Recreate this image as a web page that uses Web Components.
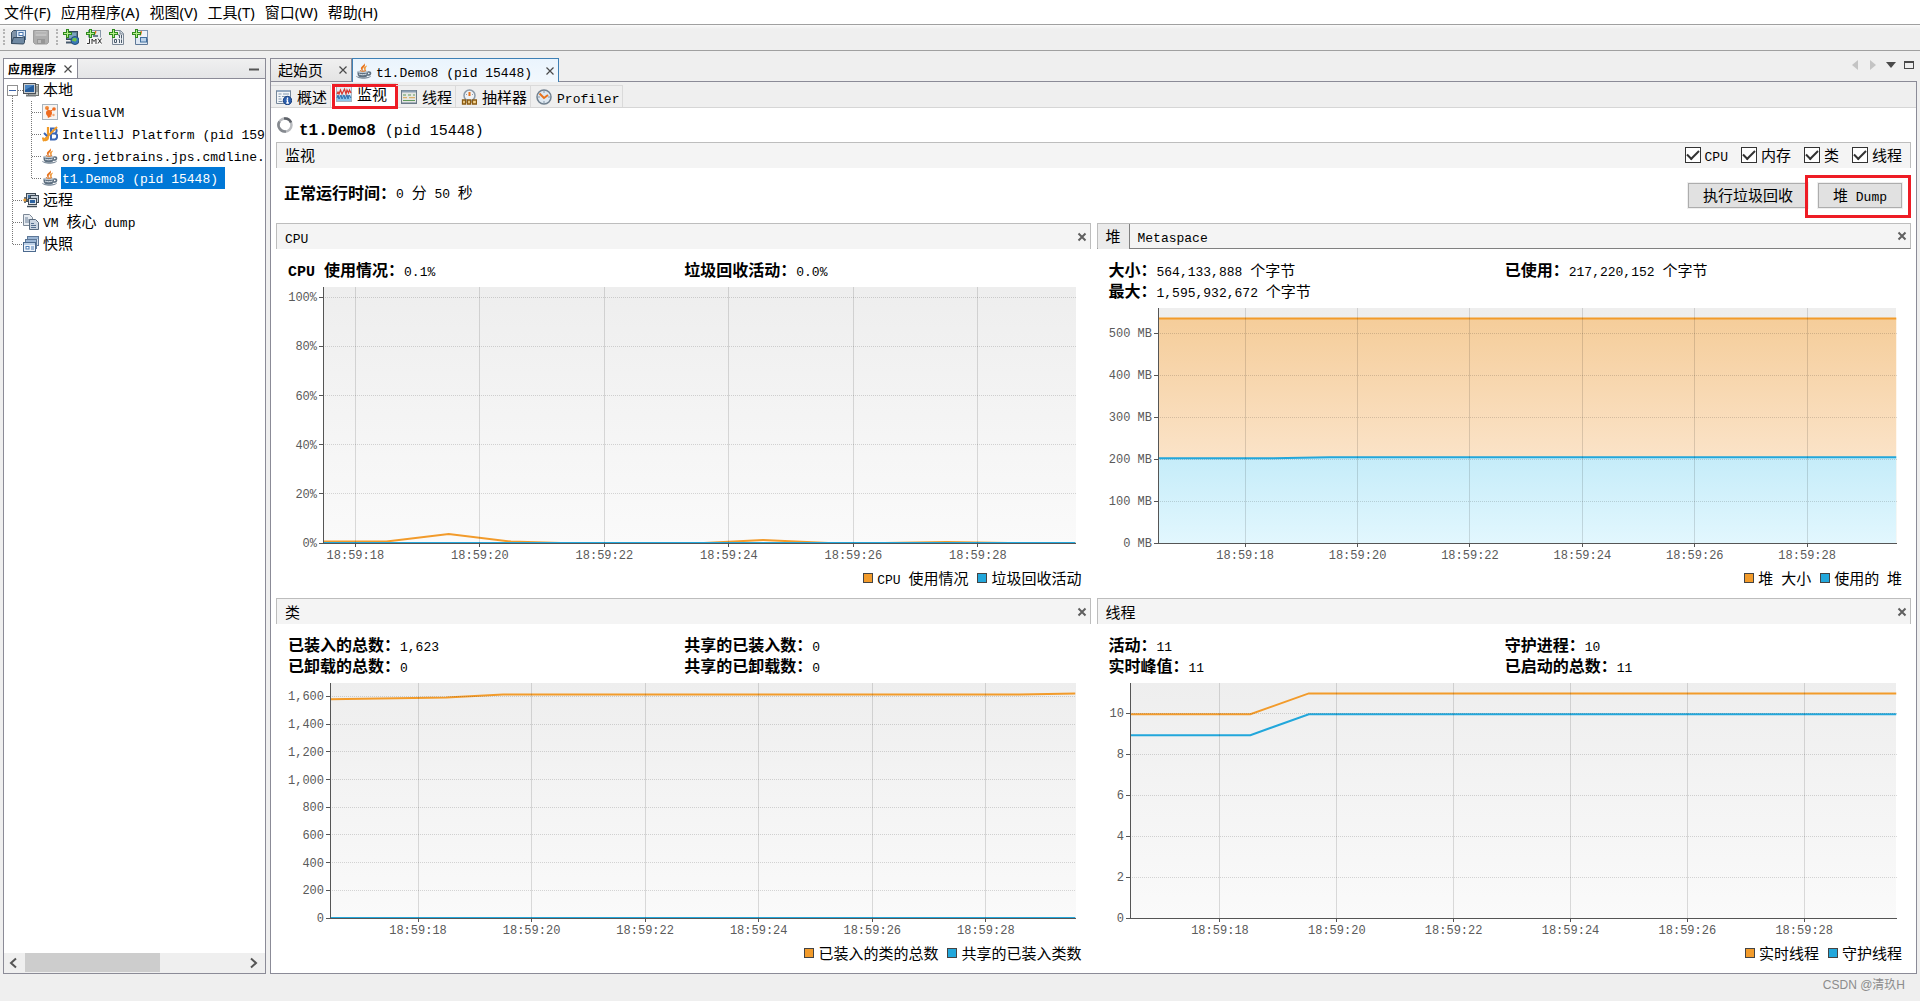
<!DOCTYPE html>
<html lang="zh-CN">
<head>
<meta charset="utf-8">
<title>VisualVM</title>
<style>
html, body { margin: 0; height: 100%; }
body { background: #efefef; color: #000; font: 15px/22px "Noto Sans CJK SC", sans-serif; }
</style>
</head>
<body>
<vm-app></vm-app>
<script>
const BASE = `
*{box-sizing:border-box}
.l{font-family:"Liberation Mono",monospace;font-size:13px;line-height:1;white-space:pre}
button{font:inherit;color:inherit;border:0;background:none;padding:0;margin:0;white-space:nowrap}
ul{list-style:none;margin:0;padding:0}
.mark{position:absolute;border:3px solid #ee1c25;pointer-events:none}
`;
/* Wraps runs of Latin text so that they get the monospaced face. */
const t = s => s.replace(/[\x20-\x7e]+/g, m => `<span class="l">${m}</span>`);

class VmElement extends HTMLElement {
  draw(css, html) {
    if (!this.shadowRoot) this.attachShadow({ mode: 'open' });
    this.shadowRoot.innerHTML = `<style>${BASE}${css}</style>${html}`;
  }
}

const PLUS = '<path d="M3 0h3v3h3v3h-3v3h-3v-3h-3v-3h3z" fill="#2e8b1e"/><path d="M4 1h1v3h3v1h-3v3h-1v-3h-3v-1h3z" fill="#b5ee8c"/>';
const CUP = '<path d="M8 0c1.500 2-4 3.500-3 6 .3 1 1.200 1.500 2 2.200.4-1-.8-1.700-.3-2.700C7.500 4 10.500 3 8 0z" fill="#e8731c"/><path d="M11 2.500c-2 .8-4 2-3 3.700.5.8.5 1.300 0 2 2.500-1 1.500-2 1.700-3C9.900 4.200 11 3.500 11 2.500z" fill="#f09a3c"/><path d="M1.500 8.500h10.500v2.500c0 2.500-2 3.500-5.200 3.500s-5.300-1-5.300-3.500z" fill="#5f7182"/><ellipse cx="6.800" cy="8.700" rx="5.200" ry="1.300" fill="#b9c5cf"/><path d="M12 9c3.500-.6 3.500 3.200-.6 3.200" fill="none" stroke="#5f7182" stroke-width="1.500"/><path d="M0 12.800c3 2 12 2 15 0-.5 4-14.500 4-15 0z" fill="#7d8c9b"/><path d="M3 11c2 1 5 1 7.500 0" stroke="#dfe6ec" fill="none"/><path d="M4 7.500c1 1 5 1 6 0" stroke="#e8731c" fill="none"/>';
const ICONS = {
  open: '<path d="M1.500 14.500v-11l2-2h4l1 2v5" fill="#7f93a8" stroke="#3c5064"/><rect x="6.500" y="1.500" width="9" height="9" fill="#dce8f6" stroke="#56779c"/><path d="M8 8.500h6" stroke="#4a76ad"/><rect x="9" y="3.500" width="4" height="3" fill="#fff" stroke="#4a76ad"/><path d="M1.500 14.500l2-6h8l3-1v6l-1 1.500z" fill="#6f89a3" stroke="#34495e"/>',
  save: '<path d="M.5 1.500h15v12l-1.500 1.500h-12l-1.500-1.500z" fill="#adadad" stroke="#9c9c9c"/><rect x="2.500" y="2" width="11" height="5" fill="#c2c2c2"/><path d="M3 4h10" stroke="#a8a8a8"/><rect x="4" y="10" width="8" height="5" fill="#969696"/><rect x="5" y="11" width="3" height="3" fill="#bcbcbc"/>',
  addremote: '<rect x="3.500" y="2.500" width="11" height="8" fill="#5a7c94" stroke="#34495b"/><rect x="5" y="4" width="8" height="5" fill="#7ba3bd"/><path d="M3 13.500h7" stroke="#44576a" stroke-width="2"/><circle cx="12" cy="11.500" r="4" fill="#3a78b8" stroke="#23507d"/><path d="M10 9l3 0 1 2-2 2-1-1-2 0z" fill="#6cc24a"/>' + PLUS,
  addjmx: '<rect x="2.500" y="1.500" width="12" height="14" fill="#e4e9f0" stroke="#8797a8"/><path d="M9.500 2c1 2-2 2.500-1 4.500" stroke="#e8731c" fill="none" stroke-width="1.500"/><path d="M7 7h5" stroke="#6f7f8e" stroke-width="2"/><rect x="0" y="8.500" width="16" height="7.500" fill="#f7f7f7"/><path d="M1 14.500h2.500v-5M6 15v-5l2 2.500 2-2.500v5M12 9.500l3.500 5M15.500 9.500l-3.500 5" stroke="#333" fill="none"/>' + PLUS,
  adddump: '<path d="M3.500 1.500h8l3 3v11h-11z" fill="#eef1f5" stroke="#7c8896"/><path d="M11 1.500v3.500h3.500" fill="#cfd6de" stroke="#7c8896"/><path d="M9 6h1.500v3M12.500 6v3.500M5.500 10.500h2v3h-2zM9.500 10.500h1v3.500M12.500 10.500v3.500" stroke="#4d5c6c" fill="none"/>' + PLUS,
  addsnap: '<rect x="3.500" y="1.500" width="12" height="11" fill="#eef3f9" stroke="#7c93ae"/><path d="M9 2c1 2-1 2.500-.5 4.500" stroke="#e8731c" fill="none" stroke-width="1.500"/><path d="M3.500 9v6.500h12v-6" fill="#dfe8f3" stroke="#5e7898"/><rect x="8.500" y="8.500" width="6" height="4.500" fill="#bcd2ea" stroke="#41709f"/>' + PLUS,
  local: '<rect x="5.500" y="2.500" width="10" height="11" fill="#c9ccc8" stroke="#6d716c"/><path d="M13 5h2M13 7h2M13 9h2" stroke="#6d716c"/><rect x=".5" y="1.500" width="12" height="10" fill="#c9ced2" stroke="#4b5055"/><rect x="2" y="3" width="9" height="7" fill="#255d9c"/><path d="M2 3h9l-9 5z" fill="#4b86c4"/><path d="M3 13.500h10" stroke="#73787a" stroke-width="2"/>',
  visualvm: '<rect x=".5" y=".5" width="15" height="15" fill="#f7f4f1" stroke="#a9b4bd"/><circle cx="5" cy="4" r="2" fill="#f08a3a"/><circle cx="12" cy="5" r="1.800" fill="#ee6b1f"/><path d="M5 4l2 4M7 8l5-3" stroke="#ee6b1f"/><circle cx="7" cy="9" r="3" fill="#ee6b1f"/><path d="M5 10l1 4 4-2z" fill="#ee6b1f"/><circle cx="11.500" cy="11" r="1.200" fill="#f2a671"/>',
  idea: '<path d="M9 2.500h3c4 0 3 5 0 5h-3zM9 7.500h3.500c4 0 3 6 0 6h-3.500z" fill="none" stroke="#3a66b5" stroke-width="2"/><path d="M6 1v10c0 4-5 4-5 .5" fill="none" stroke="#f09a28" stroke-width="2.200"/><path d="M1 15L15 1" stroke="#f09a28" stroke-width="2"/><path d="M2 7l3 3" stroke="#3a66b5" stroke-width="2"/>',
  java: CUP,
  remote: '<rect x="3.500" y="1.500" width="9" height="8" fill="#c5ced8" stroke="#3e4a56"/><rect x="5" y="3" width="6" height="3" fill="#3c6ea3"/><rect x="7.500" y="3.500" width="8" height="7" fill="#c5ced8" stroke="#3e4a56"/><rect x="5.500" y="6.500" width="8" height="6" fill="#dbe1e8" stroke="#3e4a56"/><rect x="7" y="8" width="5" height="3" fill="#2b62a0"/><path d="M2 5v6M2 8h4M4 14.500h10" stroke="#3e4a56" stroke-width="1.500"/><circle cx="1.800" cy="8" r="1.600" fill="#e89a30"/>',
  core: '<path d="M.5.5h6l3 3v8h-9z" fill="#e6ebf1" stroke="#7c8896"/><path d="M2 4h3M2 6h5M2 8h5" stroke="#6d8098"/><path d="M6.500 5.500h6l3 3v7h-9z" fill="#cdd7e2" stroke="#5a6b7e"/><path d="M8 9.500h3M8 11.500h5M8 13.500h5" stroke="#56708f"/>',
  snap: '<rect x="4.500" y=".5" width="11" height="9" fill="#d8e4f2" stroke="#5e7898"/><path d="M5 2h10" stroke="#5e88b8"/><rect x="2.500" y="3.500" width="11" height="9" fill="#d8e4f2" stroke="#5e7898"/><path d="M3 5h10" stroke="#5e88b8"/><rect x=".5" y="6.500" width="12" height="9" fill="#eef4fb" stroke="#4c6a8e"/><path d="M1 8h11" stroke="#8fb0d6"/><rect x="3" y="10.500" width="3" height="2.500" fill="#fff" stroke="#4c7db5"/><path d="M8 11h3M8 13h3" stroke="#4c7db5"/>',
  overview: '<path d="M.5 1.500h14v13h-14z" fill="#f2f5f8" stroke="#76879a"/><path d="M1 2h13" stroke="#93a8c0" stroke-width="2"/><path d="M2.500 5h3M7 5h6M2.500 7.500h2M6 7.500h6M2.500 10h3M2.500 12.500h4" stroke="#8499b0"/><circle cx="11.500" cy="11.500" r="4.200" fill="#2c5fae" stroke="#1c4380"/><path d="M11.500 8.500v1.400M10.500 11h1v3M10.300 14h2.600" stroke="#fff" stroke-width="1.300" fill="none"/>',
  monitor: '<rect x=".5" y=".5" width="15" height="15" fill="#e4ecf2" stroke="#a8b5c0"/><path d="M1 11l2-2 2 1 2-2 2 2 2-2 2 2 2-1v6H1z" fill="#8cc6ea"/><path d="M1 12l1-3 1 4 2-4 1 4 2-4 1 4 2-4 1 4 1-4 2 3" stroke="#2d6fae" fill="none"/><path d="M1 8l1-2 1 2 1.500-4 1.500 4 1-2 1.500-3 1.500 5 1-4 1.500 3 1-3 1.500 3" stroke="#d9372c" fill="none" stroke-width="1.200"/>',
  threads: '<rect x=".5" y="1.500" width="15" height="13" fill="#e6e6e2" stroke="#6b7a88"/><path d="M1 2.500h14" stroke="#8ca0b4" stroke-width="2"/><path d="M2 6h3M7 6h3M12 6h2M2 11.500h12" stroke="#5f9a5c"/><path d="M2 8.700h4M8 8.700h6" stroke="#d8a34c"/><path d="M1 13.500h14" stroke="#a5b0bb"/>',
  sampler: '<circle cx="8.500" cy="6.500" r="5.500" fill="#eef2f6" stroke="#8c9aa8" stroke-width="1.500"/><path d="M8.500 3v4" stroke="#e8731c" stroke-width="2"/><path d="M5 5l1 1M12 5l-1 1" stroke="#8c9aa8"/><path d="M1.500 11h3v4h-3zM6.500 11h3v4h-3zM11.500 11h4v4h-4z" fill="#f5d590" stroke="#8a5a12" stroke-width="1.300"/><path d="M4 13h3M9 13h3" stroke="#8a5a12"/>',
  profiler: '<circle cx="8" cy="8" r="7" fill="#dfe9f2" stroke="#70808f" stroke-width="1.500"/><path d="M8 2v2M8 12v2M2 8h2M12 8h2" stroke="#8598aa"/><path d="M3.500 4.500l4.500 4.500 4-3" fill="none" stroke="#e8731c" stroke-width="2"/>',
  spinner: '<circle cx="8" cy="8" r="6.500" fill="none" stroke="#b9bbbf" stroke-width="2.500"/><path d="M2.500 4.500A6.500 6.500 0 0 0 9 14.400" fill="none" stroke="#85898f" stroke-width="2.500"/><path d="M7 1.500A6.500 6.500 0 0 1 14 5.500" fill="none" stroke="#5d6168" stroke-width="2.500"/>',
  close: '<path d="M4.500 4.500l7 7M11.500 4.500l-7 7" stroke="#4a4a4a" stroke-width="1.200"/>',
  closebold: '<path d="M4.500 4.500l7 7M11.500 4.500l-7 7" stroke="#606060" stroke-width="2"/>',
  minus: '<path d="M3 8.500h10" stroke="#555" stroke-width="2"/>',
  prev: '<path d="M11 3v10l-6-5z" fill="#c4c4c4"/>',
  next: '<path d="M5 3v10l6-5z" fill="#c4c4c4"/>',
  down: '<path d="M3 5h10l-5 6z" fill="#4a4a4a"/>',
  max: '<rect x="3.500" y="4.500" width="9" height="7" fill="none" stroke="#4a4a4a"/><path d="M3 5h10" stroke="#4a4a4a" stroke-width="2"/>',
  left: '<path d="M11 3.500l-5 4.500 5 4.500" fill="none" stroke="#555" stroke-width="2"/>',
  right: '<path d="M5 3.500l5 4.500-5 4.500" fill="none" stroke="#555" stroke-width="2"/>'
};
customElements.define('vm-icon', class extends VmElement {
  connectedCallback() {
    this.draw(':host{display:block;flex:none;width:16px;height:16px}svg{display:block}',
      `<svg width="16" height="16" viewBox="0 0 16 16" aria-hidden="true">${ICONS[this.getAttribute('name')]}</svg>`);
  }
});

customElements.define('vm-menubar', class extends VmElement {
  connectedCallback() {
    const items = ['文件(F)', '应用程序(A)', '视图(V)', '工具(T)', '窗口(W)', '帮助(H)'];
    this.draw(`:host{display:block;background:#fff;border-bottom:1px solid #a0a0a0}
      nav{display:flex;gap:10px;height:24px;padding:0 4px;align-items:center;font-family:"Noto Sans","Noto Sans CJK SC",sans-serif}`,
      `<nav>${items.map(i => `<button>${i}</button>`).join('')}</nav>`);
  }
});

customElements.define('vm-toolbar', class extends VmElement {
  connectedCallback() {
    const b = (n, l) => `<button aria-label="${l}"><vm-icon name="${n}"></vm-icon></button>`;
    this.draw(`:host{display:flex;height:26px;padding:0 3px 2px;align-items:center;border-bottom:1px solid #a0a0a0;background:linear-gradient(#fafafa,#efefef 4px)}
      .g{display:flex;gap:7px;padding-left:5px;margin-right:7px;border-left:2px dotted #b4b4b4}`,
      `<div class="g">${b('open', '打开')}${b('save', '保存')}</div>
       <div class="g">${b('addremote', '添加主机')}${b('addjmx', '添加 JMX')}${b('adddump', '添加 dump')}${b('addsnap', '添加快照')}</div>`);
  }
});

customElements.define('vm-explorer', class extends VmElement {
  connectedCallback() {
    const line = d => `<svg class="gd" width="19" height="22"><path d="${d}" stroke="#777" stroke-dasharray="1 1" fill="none"/></svg>`;
    const V = 'M8.500 0v22', T = 'M8.500 0v22M9 11.500h10', E = 'M8.500 0v12M9 11.500h10';
    const box = '<svg class="gd" width="19" height="22"><path d="M8.500 17v5M14 11.500h5" stroke="#777" stroke-dasharray="1 1"/><rect x="3.500" y="6.500" width="10" height="10" fill="#fff" stroke="#919191"/><path d="M5 11.500h7" stroke="#3a62a8"/></svg>';
    const row = (g, icon, text, sel) => `<li role="treeitem" ${sel ? 'aria-selected="true"' : ''}>${g}<vm-icon name="${icon}"></vm-icon><span class="tx">${t(text)}</span></li>`;
    this.draw(`:host{display:flex;flex-direction:column;border:1px solid #8b8b97;background:#fff;overflow:hidden}
      header{display:flex;height:20px;border-bottom:1px solid #8b8b97;background:linear-gradient(#f0f0f0,#e4e5e7)}
      .tab{display:flex;align-items:center;gap:4px;padding:0 1px 0 4px;background:#fff;border-right:1px solid #8b8b97;font-size:12px;font-weight:700}
      .min{margin-left:auto;padding-right:3px}
      ul{flex:1}
      li{display:flex;align-items:center;height:22px;white-space:nowrap}
      .gd{flex:none}
      .tx{margin-left:3px;padding:0 1px 2px;line-height:20px}
      [aria-selected] .tx{background:#0078d7;color:#fff;padding-right:7px}
      .sb{display:flex;align-items:center;height:20px;background:#efefef;padding:0 3px 0 1px}
      .tr{flex:1;height:20px;margin:0 4px}
      .th{width:62%;height:19px;background:#cdcdcd}`,
      `<header><div class="tab">应用程序<button aria-label="关闭"><vm-icon name="close"></vm-icon></button></div><button class="min" aria-label="最小化"><vm-icon name="minus"></vm-icon></button></header>
      <ul role="tree">
        ${row(box, 'local', '本地')}
        ${row(line(V) + line(T), 'visualvm', 'VisualVM')}
        ${row(line(V) + line(T), 'idea', 'IntelliJ Platform (pid 159')}
        ${row(line(V) + line(T), 'java', 'org.jetbrains.jps.cmdline.')}
        ${row(line(V) + line(E), 'java', 't1.Demo8 (pid 15448)', 1)}
        ${row(line(T), 'remote', '远程')}
        ${row(line(T), 'core', 'VM 核心 dump')}
        ${row(line(E), 'snap', '快照')}
      </ul>
      <div class="sb"><button aria-label="向左"><vm-icon name="left"></vm-icon></button><div class="tr"><div class="th"></div></div><button aria-label="向右"><vm-icon name="right"></vm-icon></button></div>`);
  }
});

/* Time chart: every coordinate is a percentage of the plot, so it follows its box. */
const ORANGE = '#f29b2b', BLUE = '#22a7db';
customElements.define('vm-chart', class extends VmElement {
  set data(d) {
    const labels = d.ticks.map(v => d.format(v));
    const axis = Math.max(...labels.map(s => s.length)) * 7 + 19;
    const X = s => (s - d.from) / (d.to - d.from) * 100;
    const Y = v => 100 - v / d.max * 100;
    const pts = line => line.map(([s, v]) => `${X(s)},${Y(v)}`).join(' ');
    const area = (line, id) => `<polygon points="${pts(line)} 100,100 0,100" fill="url(#${id})"/>`;
    const curve = (line, c) => `<polyline points="${pts(line)}" stroke="${c}" stroke-width="2" fill="none" vector-effect="non-scaling-stroke"/>`;
    const [a, b] = d.series;
    this.draw(`:host{display:flex;flex:1;min-height:0;padding:0 15px 24px ${axis}px}
      .plot{display:block;width:100%;height:100%;overflow:visible;background:linear-gradient(#eee,#fafafa)}
      text{font:12px "Liberation Mono",monospace;fill:#5a5a5a}
      .v,.h,.ax{shape-rendering:crispEdges}
      .v{stroke:rgba(0,0,0,.13)}.h{stroke:rgba(0,0,0,.15);stroke-dasharray:1 1}.ax{stroke:#555}`,
      `<svg class="plot">
        <defs>
          <linearGradient id="o" x2="0" y2="1"><stop stop-color="#f5cd9a"/><stop offset=".65" stop-color="#fbe4ca"/></linearGradient>
          <linearGradient id="b" x2="0" y2="1"><stop stop-color="#c5ecf9"/><stop offset="1" stop-color="#e2f7fe"/></linearGradient>
        </defs>
        <svg width="100%" height="100%" viewBox="0 0 100 100" preserveAspectRatio="none">
          ${d.filled ? area(a, 'o') : ''}${curve(a, ORANGE)}${d.filled ? area(b, 'b') : ''}${curve(b, BLUE)}
        </svg>
        ${[18, 20, 22, 24, 26, 28].map(s => `<line class="v" x1="${X(s)}%" x2="${X(s)}%" y2="100%"/>
          <svg x="${X(s)}%" y="100%" overflow="visible"><line class="ax" y2="4"/><text y="16" text-anchor="middle">18:59:${s}</text></svg>`).join('')}
        ${d.ticks.map((v, i) => `${v ? `<line class="h" x2="100%" y1="${Y(v)}%" y2="${Y(v)}%"/>` : ''}
          <svg y="${Y(v)}%" overflow="visible"><line class="ax" x1="-4"/><text x="-6" y="4" text-anchor="end">${labels[i]}</text></svg>`).join('')}
        <line class="ax" y2="100%"/><line class="ax" x2="100%" y1="100%" y2="100%"/>
      </svg>`);
  }
});

customElements.define('vm-card', class extends VmElement {
  set data(d) {
    const stat = ([k, v]) => `<div><dt>${t(k)}</dt><dd>${t(v)}</dd></div>`;
    this.draw(`:host{display:flex;flex-direction:column;min-width:0;min-height:0}
      header{display:flex;align-items:center;height:26px;flex:none;background:#f4f4f4;border:1px solid #bdbdbd;border-bottom:0}
      header.tabs{border-bottom:1px solid #808080}
      header button{padding:0 8px;height:25px;line-height:22px}
      header .on{background:#ebebeb;border-right:1px solid #808080}
      header .x{margin-left:auto;padding:0}
      dl{display:grid;grid-template-columns:1fr 1fr;margin:11px 10px 6px 12px}
      dl div{display:flex;height:21px;align-items:baseline;line-height:18px;white-space:nowrap}
      dt{font-size:16px;font-weight:700}dt .l{font-size:15px}dd{margin:0}
      .lg{display:flex;justify-content:flex-end;gap:9px;height:24px;padding:0 9px 3px 0}
      .lg li{display:flex;align-items:center;gap:4px;line-height:18px}
      .lg span{white-space:nowrap}
      i{width:10px;height:10px;border:1px solid #444;background:var(--c)}`,
      `<header class="${d.titles[1] ? 'tabs' : ''}">${d.titles.map((h, i) => `<button class="${d.titles[1] && !i ? 'on' : ''}">${t(h)}</button>`).join('')}
        <button class="x" aria-label="关闭"><vm-icon name="closebold"></vm-icon></button></header>
      <dl>${d.stats.map(stat).join('')}</dl>
      <vm-chart></vm-chart>
      <ul class="lg"><li><i style="--c:${ORANGE}"></i><span>${t(d.legend[0])}</span></li><li><i style="--c:${BLUE}"></i><span>${t(d.legend[1])}</span></li></ul>`);
    this.shadowRoot.querySelector('vm-chart').data = d.chart;
  }
});

const CARDS = [
  { titles: ['CPU'], stats: [['CPU 使用情况：', '0.1%'], ['垃圾回收活动：', '0.0%']], legend: ['CPU 使用情况', '垃圾回收活动'],
    chart: { from: 17.48, to: 29.57, max: 104.2, ticks: [0, 20, 40, 60, 80, 100], format: v => v + '%',
      series: [[[17.48, .6], [18.5, .6], [19.5, 3.7], [20.5, .6], [21.3, 0], [23.6, 0], [24.55, 1.2], [25.6, 0], [26.5, 0], [27.5, .4], [28.5, 0], [29.57, 0]], [[17.48, 0], [29.57, 0]]] } },
  { titles: ['堆', 'Metaspace'], stats: [['大小：', '564,133,888 个字节'], ['已使用：', '217,220,152 个字节'], ['最大：', '1,595,932,672 个字节']], legend: ['堆 大小', '使用的 堆'],
    chart: { from: 16.45, to: 29.59, max: 560, ticks: [0, 100, 200, 300, 400, 500], format: v => v + ' MB', filled: true,
      series: [[[16.45, 535], [29.59, 535]], [[16.45, 202], [18.5, 202], [19.5, 204.5], [29.59, 204.5]]] } },
  { titles: ['类'], stats: [['已装入的总数：', '1,623'], ['共享的已装入数：', '0'], ['已卸载的总数：', '0'], ['共享的已卸载数：', '0']], legend: ['已装入的类的总数', '共享的已装入类数'],
    chart: { from: 16.45, to: 29.58, max: 1697, ticks: [0, 200, 400, 600, 800, 1000, 1200, 1400, 1600], format: v => v.toLocaleString('en-US'),
      series: [[[16.45, 1579], [18.5, 1592], [19.5, 1614], [28.6, 1614], [29.58, 1622]], [[16.45, 0], [29.58, 0]]] } },
  { titles: ['线程'], stats: [['活动：', '11'], ['守护进程：', '10'], ['实时峰值：', '11'], ['已启动的总数：', '11']], legend: ['实时线程', '守护线程'],
    chart: { from: 16.46, to: 29.58, max: 11.49, ticks: [0, 2, 4, 6, 8, 10], format: String,
      series: [[[16.46, 9.96], [18.52, 9.96], [19.52, 10.98], [29.58, 10.98]], [[16.46, 8.94], [18.52, 8.94], [19.52, 9.96], [29.58, 9.96]]] } }
];

customElements.define('vm-check', class extends VmElement {
  connectedCallback() {
    this.draw(`:host{display:block}label{display:flex;align-items:center;gap:4px;line-height:20px;white-space:nowrap}
      input{appearance:none;display:grid;place-items:center;width:16px;height:16px;margin:0;border:1px solid #333;background:#fff}
      input:checked::before{content:"";width:10px;height:5px;border:solid #333;border-width:0 0 2px 2px;rotate:-45deg;margin-bottom:3px}`,
      `<label><input type="checkbox" checked><span>${t(this.getAttribute('label'))}</span></label>`);
  }
});

customElements.define('vm-monitor', class extends VmElement {
  connectedCallback() {
    this.draw(`:host{display:flex;flex-direction:column;flex:1;min-height:0;background:#fff;padding:0 5px 7px 5px}
      h1{display:flex;align-items:center;gap:6px;height:34px;margin:0;padding-left:1px;font-weight:400}
      h1 .l{font-size:15px}h1 b .l{font-size:16px}
      .bar{display:flex;align-items:center;height:26px;flex:none;padding:0 8px 2px;line-height:20px;background:#f4f4f4;border:1px solid #bdbdbd;border-bottom:0}
      .checks{display:flex;gap:13px;margin-left:auto}
      .up{display:flex;height:55px;flex:none;padding:15px 9px 0 8px;line-height:18px;align-items:flex-start}
      .up b{font-size:16px}
      .acts{display:flex;gap:10px;margin-left:auto}
      .acts div{position:relative}
      .acts button{display:block;height:25px;padding:0 14px 2px;background:#e1e1e1;border:1px solid #adadad;outline:1px solid #efefef;line-height:20px}
      .mark{inset:-8px -9px -10px -13px}
      .cards{flex:1;min-height:0;display:grid;grid-template-columns:1fr 1fr;grid-template-rows:1fr 1fr;gap:7px 6px}`,
      `<h1><vm-icon name="spinner"></vm-icon><span><b>${t('t1.Demo8')}</b>${t(' (pid 15448)')}</span></h1>
      <div class="bar"><span>监视</span><div class="checks">${['CPU', '内存', '类', '线程'].map(l => `<vm-check label="${l}"></vm-check>`).join('')}</div></div>
      <div class="up"><b>正常运行时间：</b><span>${t('0 分 50 秒')}</span>
        <div class="acts"><div><button>执行垃圾回收</button></div><div><button>${t('堆 Dump')}</button><span class="mark"></span></div></div></div>
      <div class="cards">${CARDS.map(() => '<vm-card></vm-card>').join('')}</div>`);
    this.shadowRoot.querySelectorAll('vm-card').forEach((c, i) => { c.data = CARDS[i]; });
  }
});

customElements.define('vm-document', class extends VmElement {
  connectedCallback() {
    const ic = n => `<vm-icon name="${n}"></vm-icon>`;
    const sub = (n, l, on) => `<button role="tab" class="${on ? 'on' : ''}">${ic(n)}<span>${t(l)}</span>${on ? '<span class="mark"></span>' : ''}</button>`;
    this.draw(`:host{display:flex;flex-direction:column;min-width:0;min-height:0}
      .files{display:flex;height:23px;flex:none}
      .file{display:flex;align-items:center;height:23px;border:1px solid #8b8b97;border-bottom:0;padding:0 0 0 7px;gap:12px;background:linear-gradient(#f0f0f0,#e4e4e4)}
      .file.on{height:24px;border-color:#3e80b5;background:linear-gradient(#eaf4fd,#f2f8fd);padding-left:3px;gap:4px;z-index:1}
      .file.on button:last-child{margin-left:6px}
      .nav{display:flex;margin-left:auto;align-items:center;height:14px;gap:2px}
      .pane{flex:1;min-height:0;display:flex;flex-direction:column;border:1px solid #8b8b97}
      .subs{display:flex;align-items:flex-end;height:26px;flex:none;border-bottom:1px solid #d6d6d6}
      .subs button{position:relative;display:flex;align-items:center;gap:5px;height:22px;padding:0 3px 0 5px;line-height:20px;border:1px solid #dadada;border-width:1px 1px 0 0}
      .subs .on{height:24px;background:#fff;padding:0 8px 4px 5px}
      .subs .mark{inset:0 -3px -2px 1px}`,
      `<div class="files" role="tablist">
        <div class="file"><button role="tab">起始页</button><button aria-label="关闭">${ic('close')}</button></div>
        <div class="file on">${ic('java')}<button role="tab">${t('t1.Demo8 (pid 15448)')}</button><button aria-label="关闭">${ic('close')}</button></div>
        <div class="nav">${['prev', 'next', 'down', 'max'].map(n => `<button aria-label="${n}">${ic(n)}</button>`).join('')}</div>
      </div>
      <div class="pane"><div class="subs" role="tablist">${sub('overview', '概述')}${sub('monitor', '监视', 1)}${sub('threads', '线程')}${sub('sampler', '抽样器')}${sub('profiler', 'Profiler')}</div>
      <vm-monitor></vm-monitor></div>`);
  }
});

customElements.define('vm-app', class extends VmElement {
  connectedCallback() {
    this.draw(`:host{display:flex;flex-direction:column;height:100vh;overflow:hidden}
      main{flex:1;min-height:0;display:grid;grid-template-columns:263px 1fr;gap:4px;padding:7px 3px 0}
      footer{display:flex;justify-content:flex-end;height:27px;padding-right:15px;font:12px/22px "Liberation Sans","Noto Sans CJK SC",sans-serif;color:#8c8c8c}`,
      `<vm-menubar></vm-menubar><vm-toolbar></vm-toolbar>
      <main><vm-explorer></vm-explorer><vm-document></vm-document></main>
      <footer>CSDN @清玖H</footer>`);
  }
});
</script>
</body>
</html>
